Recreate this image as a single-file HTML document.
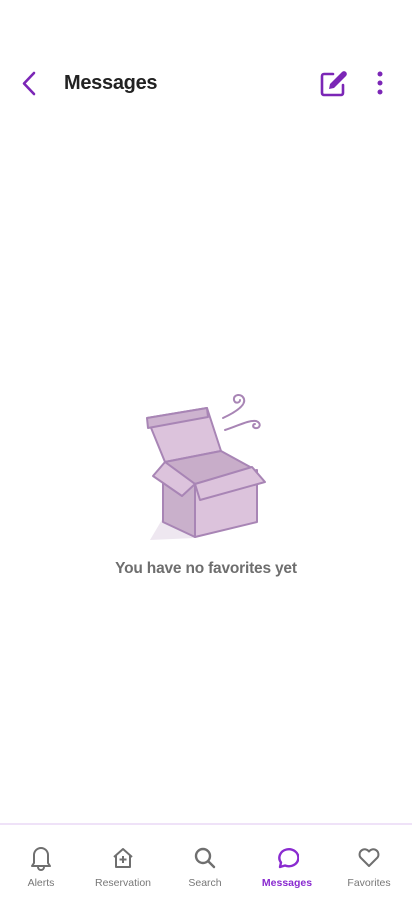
<!DOCTYPE html>
<html><head><meta charset="utf-8"><style>
*{margin:0;padding:0;box-sizing:border-box}
body{width:412px;height:917px;background:#fff;font-family:"Liberation Sans",sans-serif;position:relative;overflow:hidden}
.title{position:absolute;left:64px;top:72px;font-size:20px;font-weight:bold;color:#222;letter-spacing:-0.3px}
.msg{position:absolute;left:0;width:412px;top:560px;text-align:center;font-size:15.5px;font-weight:bold;color:#6e6e6e;letter-spacing:-0.2px}
.nav{position:absolute;left:0;top:823px;width:412px;height:94px;border-top:2px solid #efe2f8}
.tab{position:absolute;top:0;width:82px;text-align:center}
.tab svg{position:absolute;top:20px;left:29px}
.tab span{position:absolute;top:52px;left:0;width:82px;font-size:10.5px;color:#777}
</style></head><body>
<svg style="position:absolute;left:18px;top:70px" width="22" height="28" viewBox="0 0 22 28"><path d="M16 3 L6 13.5 L16 24" fill="none" stroke="#7b26b6" stroke-width="2.6" stroke-linecap="round" stroke-linejoin="round"/></svg>
<div class="title">Messages</div>
<svg style="position:absolute;left:318px;top:68px" width="32" height="32" viewBox="0 0 32 32"><path d="M15 6 H6 a2 2 0 0 0 -2 2 V25 a2 2 0 0 0 2 2 H23 a2 2 0 0 0 2 -2 V17" fill="none" stroke="#7b26b6" stroke-width="2.6" stroke-linecap="round"/><path d="M11 21 L12 16 L24 4 a2.5 2.5 0 0 1 4 4 L16 20 Z" fill="#7b26b6"/></svg>
<svg style="position:absolute;left:374px;top:70px" width="12" height="26" viewBox="0 0 12 26"><circle cx="6" cy="4" r="2.5" fill="#7b26b6"/><circle cx="6" cy="13" r="2.5" fill="#7b26b6"/><circle cx="6" cy="22" r="2.5" fill="#7b26b6"/></svg>

<svg style="position:absolute;left:0;top:0" width="412" height="600" viewBox="0 0 412 600">
<g stroke="#a885b5" stroke-width="2" stroke-linejoin="round" fill="#dcc3dc">
<path d="M150 540 L195 538 L163 518 Z" fill="#eee7f0" stroke="none"/>
<path d="M147 418 L207 408 L221 451 L165 462 Z"/>
<path d="M147 418 L148 428 L208 417 L207 408 Z" fill="#cdb3cf"/>
<path d="M165 462 L221 451 L252 468 L195 484 Z" fill="#c8adc9"/>
<path d="M163 480 L195 484 L195 537 L163 522 Z" fill="#c9b0cb"/>
<path d="M195 484 L257 470 L257 522 L195 537 Z"/>
<path d="M165 462 L153 476 L182 496 L195 484 Z"/>
<path d="M252 467 L265 482 L200 500 L195 484 Z"/>
</g>
<g fill="none" stroke="#a885b5" stroke-width="2" stroke-linecap="round">
<path d="M223 418 C236 412 246 405 244 399 C242 393 233 394 234 400 C235 404 240 403 240 400"/>
<path d="M225 430 C238 426 248 420 256 421 C262 423 260 429 255 428 C252 427 253 424 255 424"/>
</g>
</svg>
<div class="msg">You have no favorites yet</div>

<div class="nav">
<div class="tab" style="left:0"><svg width="24" height="26" viewBox="0 0 24 26" fill="none" stroke="#6f6f6f" stroke-width="2" stroke-linejoin="round"><path d="M5 18 V10 a7 7 0 0 1 14 0 V18 L21 21 H3 Z"/><path d="M9 22 a3 3 0 0 0 6 0"/></svg><span>Alerts</span></div>
<div class="tab" style="left:82px"><svg width="24" height="26" viewBox="0 0 24 26" fill="none" stroke="#6f6f6f" stroke-width="2" stroke-linejoin="round"><path d="M3 12 L12 4 L21 12 M5 10.5 V22 H19 V10.5"/><path d="M12 11 V18 M8.5 14.5 H15.5"/></svg><span>Reservation</span></div>
<div class="tab" style="left:164px"><svg width="24" height="26" viewBox="0 0 24 26" fill="none" stroke="#6f6f6f" stroke-width="2.4" stroke-linecap="round"><circle cx="10" cy="11" r="7"/><path d="M15 16 L21 22"/></svg><span>Search</span></div>
<div class="tab" style="left:246px"><svg width="24" height="26" viewBox="0 0 24 26" fill="none" stroke="#8a2bd0" stroke-width="2.4" stroke-linejoin="round"><path d="M5 22 L6 17.5 A9.5 8.5 0 1 1 10 20.5 Z"/></svg><span style="color:#8a2bd0;font-weight:bold">Messages</span></div>
<div class="tab" style="left:328px"><svg width="24" height="26" viewBox="0 0 24 26" fill="none" stroke="#6f6f6f" stroke-width="2" stroke-linejoin="round"><path d="M12 21 L3.5 12.5 a5 5 0 0 1 8.5 -6 a5 5 0 0 1 8.5 6 Z"/></svg><span>Favorites</span></div>
</div>
</body></html>
